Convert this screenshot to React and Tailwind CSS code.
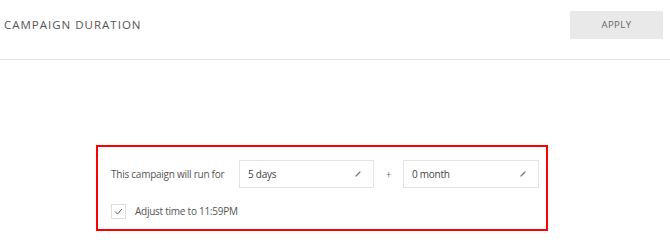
export default function App() {
  const font = { fontFamily: '"Open Sans", "Noto Sans", sans-serif' };

  // tiny diagonal mark used as the dropdown caret
  const Caret = () => (
    <svg width="6" height="6" viewBox="0 0 6 6" className="shrink-0">
      <path d="M1 5 L5 1" stroke="#777" strokeWidth="1.2" strokeLinecap="round" />
    </svg>
  );

  return (
    <div className="w-[670px] h-[248px] bg-white text-[#555]" style={font}>
      <div className="flex items-start justify-between h-[60px] border-b border-[#e6e6e6] pl-[4px] pr-[7px] pt-[11px]">
        <h1 className="text-[11.5px] leading-[28px] tracking-[1px] text-[#555] uppercase whitespace-nowrap">Campaign Duration</h1>
        <button className="w-[93px] h-[28px] bg-[#e9e9e9] text-[9.5px] tracking-[0.5px] text-[#666] uppercase">
          Apply
        </button>
      </div>

      <div className="pt-[85px] pl-[96px]">
        <div className="w-[452px] h-[86px] border-2 border-[#f00] pl-[13px] pt-[13px] text-[10px] tracking-[-0.25px]">
          <div className="flex items-center h-[28px]">
            <span className="w-[128px] whitespace-nowrap">This campaign will run for</span>
            <div className="w-[135px] h-[28px] border border-[#e4e4e4] flex items-center justify-between pl-[8px] pr-[12px]">
              <span className="text-[#444]">5 days</span>
              <Caret />
            </div>
            <span className="w-[29px] text-center text-[#777]">+</span>
            <div className="w-[136px] h-[28px] border border-[#e4e4e4] flex items-center justify-between pl-[8px] pr-[12px]">
              <span className="text-[#444]">0 month</span>
              <Caret />
            </div>
          </div>
          <div className="flex items-center mt-[16px] gap-[9px]">
            <div className="w-[15px] h-[15px] border border-[#ddd] flex items-center justify-center">
              <svg width="9" height="7" viewBox="0 0 9 7">
                <path d="M1 3.5 L3.5 6 L8 1" fill="none" stroke="#555" strokeWidth="1" />
              </svg>
            </div>
            <span>Adjust time to 11:59PM</span>
          </div>
        </div>
      </div>
    </div>
  );
}
